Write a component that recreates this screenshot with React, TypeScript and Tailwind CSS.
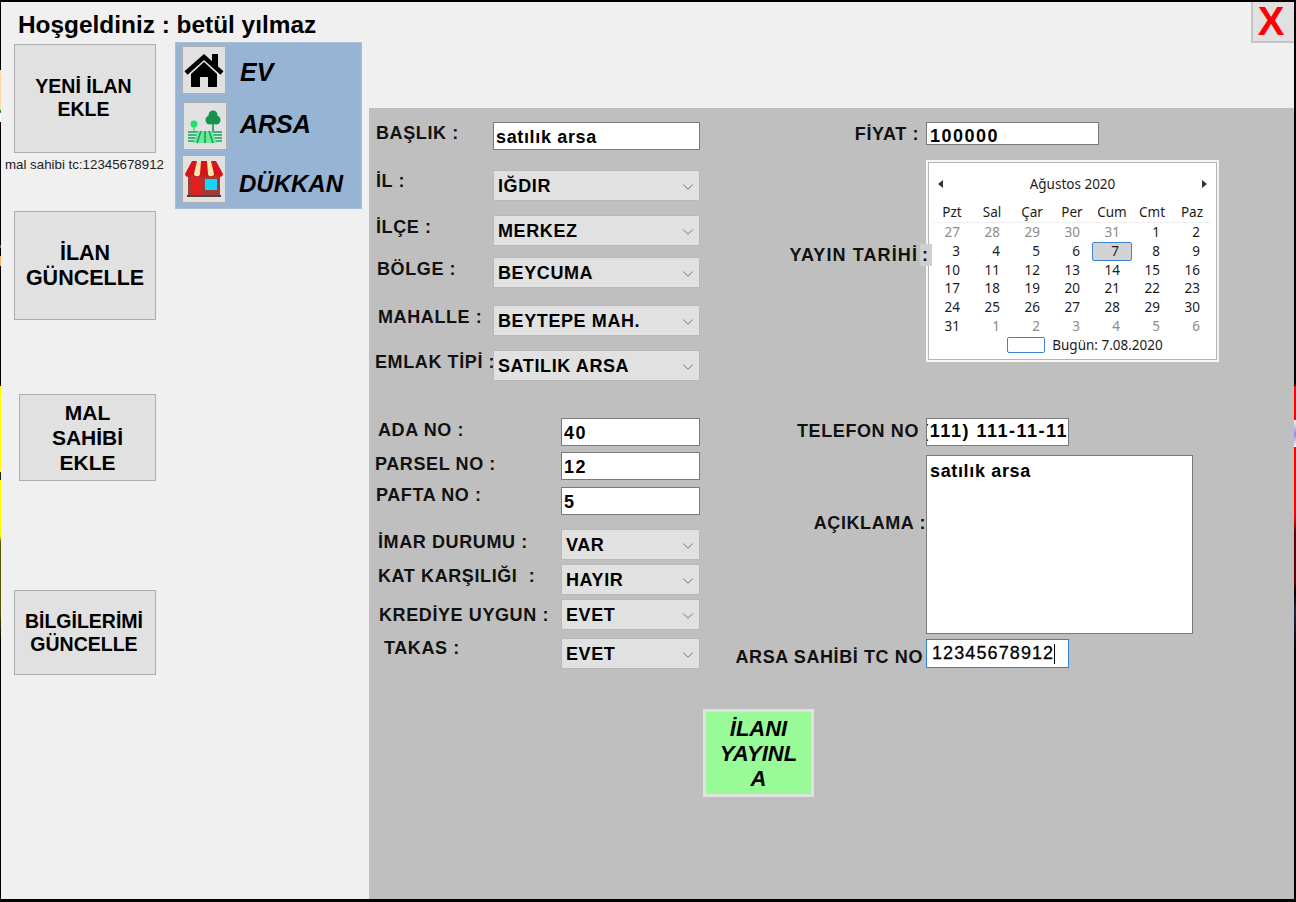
import type { ReactNode } from 'react';
import { ChevronDown } from 'lucide-react';

const SANS = 'font-["Liberation_Sans",Arial,sans-serif]';

const leftRows = [
  { label: 'BAŞLIK :', value: 'satılık arsa', kind: 'input', gap: 'mt-[14px]', labelBox: 'w-[124px] pl-[7px] -mt-[1px]', control: 'w-[207px] h-[28px]' },
  { label: 'İL :', value: 'IĞDIR', kind: 'select', gap: 'mt-[20px]', labelBox: 'w-[124px] pl-[7px] -mt-[1px]', control: 'w-[207px] h-[31px]' },
  { label: 'İLÇE :', value: 'MERKEZ', kind: 'select', gap: 'mt-[14px]', labelBox: 'w-[124px] pl-[7px]', control: 'w-[207px] h-[31px]' },
  { label: 'BÖLGE :', value: 'BEYCUMA', kind: 'select', gap: 'mt-[11px]', labelBox: 'w-[124px] pl-[8px]', control: 'w-[207px] h-[31px]' },
  { label: 'MAHALLE :', value: 'BEYTEPE MAH.', kind: 'select', gap: 'mt-[17px]', labelBox: 'w-[124px] pl-[9px]', control: 'w-[207px] h-[31px]' },
  { label: 'EMLAK TİPİ :', value: 'SATILIK ARSA', kind: 'select', gap: 'mt-[14px]', labelBox: 'w-[124px] pl-[6px]', control: 'w-[207px] h-[31px]' },
  { label: 'ADA NO :', value: '40', kind: 'input', gap: 'mt-[37px]', labelBox: 'w-[192px] pl-[9px]', control: 'w-[139px] h-[28px]' },
  { label: 'PARSEL NO :', value: '12', kind: 'input', gap: 'mt-[6px]', labelBox: 'w-[192px] pl-[6px]', control: 'w-[139px] h-[28px]' },
  { label: 'PAFTA NO :', value: '5', kind: 'input', gap: 'mt-[7px]', labelBox: 'w-[192px] pl-[7px] -mt-[4px]', control: 'w-[139px] h-[28px]' },
  { label: 'İMAR DURUMU :', value: 'VAR', kind: 'select', gap: 'mt-[14px]', labelBox: 'w-[192px] pl-[9px] mt-[1px]', control: 'w-[139px] h-[31px]' },
  { label: 'KAT KARŞILIĞI  :', value: 'HAYIR', kind: 'select', gap: 'mt-[4px]', labelBox: 'w-[192px] pl-[9px]', control: 'w-[139px] h-[31px]' },
  { label: 'KREDİYE UYGUN :', value: 'EVET', kind: 'select', gap: 'mt-[4px]', labelBox: 'w-[192px] pl-[10px] mt-[4px]', control: 'w-[139px] h-[31px]' },
  { label: 'TAKAS :', value: 'EVET', kind: 'select', gap: 'mt-[8px]', labelBox: 'w-[192px] pl-[15px] -mt-[2px]', control: 'w-[139px] h-[31px]' },
];

const weeks = [
  [27, 28, 29, 30, 31, 1, 2],
  [3, 4, 5, 6, 7, 8, 9],
  [10, 11, 12, 13, 14, 15, 16],
  [17, 18, 19, 20, 21, 22, 23],
  [24, 25, 26, 27, 28, 29, 30],
  [31, 1, 2, 3, 4, 5, 6],
];

function HouseIcon() {
  return (
    <svg viewBox="0 0 40 40" className="w-[40px] h-[40px]">
      <path d="M2 23 20 7l18 16" fill="none" stroke="#000" strokeWidth="4.500" />
      <path d="M28 4h6v15l-6-5z" fill="#000" />
      <path d="M7 24 20 12l13 12v13H24V27h-8v10H7z" fill="#000" />
    </svg>
  );
}

function LandIcon() {
  return (
    <svg viewBox="0 0 40 40" className="w-[40px] h-[40px]">
      <circle cx="9" cy="18" r="3.500" fill="#1fe36b" />
      <path d="M8.300 19h1.400v6H8.300z" fill="#1fe36b" />
      <circle cx="28" cy="9" r="4.500" fill="#15924f" />
      <circle cx="25" cy="14" r="4.500" fill="#15924f" />
      <circle cx="31" cy="14" r="4.500" fill="#15924f" />
      <path d="M27.200 14h1.600v11h-1.600z" fill="#15924f" />
      <path d="M3 26h34M3 29h34M3 32h34M3 35h34" stroke="#12a355" strokeWidth="1.600" />
      <path d="M13 25h14l5 12H8z" fill="#72e59d" />
      <path d="M16 25l-4 12M20 25v12M24 25l4 12" stroke="#12a355" strokeWidth="1.600" />
    </svg>
  );
}

function ShopIcon() {
  return (
    <svg viewBox="0 0 40 40" className="w-[40px] h-[40px]">
      <path d="M4 15h32v22H4z" fill="#a33a36" />
      <path d="M8 19h10v17H8z" fill="#e0201f" />
      <path d="M21 20h12v11H21z" fill="#15d4f7" />
      <path d="M3 36h34v2H3z" fill="#54423f" />
      <path d="M8 2h24l7 13c0 4-7 4-7 0 0 4-6 4-6 0 0 4-6 4-6 0 0 4-6 4-6 0 0 4-6 4-6 0 0 4-7 4-7 0z" fill="#d6121a" />
      <path d="M13 2h4l-1 13c0 3-6 3-6 0zM23 2h4l3 13c0 3-6 3-6 0z" fill="#f7e7a8" />
    </svg>
  );
}

function Tile({ children, className }: { children: ReactNode; className: string }) {
  return (
    <div className={`flex items-center justify-center bg-[#e1e1e1] border border-[#adadad] w-[44px] h-[48px] shrink-0 ${className}`}>
      {children}
    </div>
  );
}

function SideButton({ children, className }: { children: ReactNode; className: string }) {
  return (
    <button className={`flex items-center justify-center text-center bg-[#e1e1e1] border border-[#adadad] text-black font-bold ${className}`}>
      {children}
    </button>
  );
}

function TextBox({ value, className }: { value: string; className: string }) {
  const numeric = /^[\d() -]+$/.test(value);
  return (
    <div className={`flex items-center bg-white border border-[#7a7a7a] pl-[2px] pt-[2px] font-bold text-[18px] text-black ${numeric ? 'tracking-[1.500px]' : 'tracking-[0.650px]'} ${className}`}>
      {value}
    </div>
  );
}

function Combo({ value, className }: { value: string; className: string }) {
  return (
    <div className={`flex items-center justify-between bg-[#e1e1e1] border border-[#b8b8b8] pl-[4px] pr-[2px] pt-[2px] font-bold text-[18px] tracking-[0.600px] text-black ${className}`}>
      <span>{value}</span>
      <ChevronDown className="w-[18px] h-[18px] text-[#666666]" strokeWidth={1.200} />
    </div>
  );
}

function Calendar() {
  return (
    <div className={`w-[293px] h-[202px] shrink-0 bg-white border-2 border-[#f6f6f6] shadow-[inset_0_0_0_1px_#b5b5b5] font-["Noto_Sans",sans-serif] text-[13.500px] text-[#1c1c1c] px-[8px] pt-[12px] leading-[19px]`}>
      <div className="flex items-center justify-between h-[20px] px-[2px]">
        <span className="w-0 h-0 border-y-[4px] border-y-transparent border-r-[5px] border-r-[#333333]" />
        <span>Ağustos 2020</span>
        <span className="w-0 h-0 border-y-[4px] border-y-transparent border-l-[5px] border-l-[#333333]" />
      </div>
      <div className="grid grid-cols-7 mt-[9px] w-[280px] h-[20px] border-b border-[#f0f0f0] text-center -ml-[4px]">
        {['Pzt', 'Sal', 'Çar', 'Per', 'Cum', 'Cmt', 'Paz'].map((d) => (
          <span key={d}>{d}</span>
        ))}
      </div>
      <div className="grid grid-cols-7 w-[280px] -ml-[4px]">
        {weeks.map((week, w) =>
          week.map((day, i) => {
            const muted = (w === 0 && i < 5) || (w === 5 && i > 0);
            const today = w === 1 && i === 4;
            return (
              <span
                key={`${w}-${i}`}
                className={`h-[18.800px] text-right pr-[12px] ${muted ? 'text-[#8c8c8c]' : ''} ${today ? 'bg-[#d3d3d3] border border-[#3a84d6] rounded-[2px] leading-[17px]' : ''}`}
              >
                {day}
              </span>
            );
          })
        )}
      </div>
      <div className="flex items-center justify-center gap-[7px] pl-[25px]">
        <span className="w-[38px] h-[16px] border border-[#3a84d6] rounded-[2px]" />
        <span>Bugün: 7.08.2020</span>
      </div>
    </div>
  );
}

function FormLabel({ children, className }: { children: ReactNode; className: string }) {
  return <div className={`font-bold text-[18px] leading-[24px] tracking-[0.600px] text-[#111111] whitespace-pre ${className}`}>{children}</div>;
}

export default function App() {
  return (
    <div className={`${SANS} w-[1296px] h-[902px] overflow-hidden flex bg-[#f0f0f0] border-t-2 border-b-[3px] border-black`}>
      {/* ekran kenarindan gorunen arka plan seritleri */}
      <div className="w-px shrink-0 bg-[linear-gradient(to_bottom,#000_68px,#ffd9a0_68px,#ffd9a0_108px,#2a8a3a_108px,#2a8a3a_111px,#ffffff_111px,#ffffff_120px,#000_120px,#000_243px,#2a8a3a_243px,#2a8a3a_246px,#000_246px,#000_254px,#ffb060_254px,#ffb060_264px,#000_264px,#000_384px,#ffff00_384px,#ffff00_470px,#222_470px,#222_478px,#ffff00_478px,#ffff00_534px,#555500_540px,#555500_610px,#000_640px)]" />

      {/* Sol menu */}
      <aside className="w-[368px] shrink-0 flex flex-col">
        <h1 className="text-[24.400px] font-bold text-black leading-[28px] pl-[17px] pt-[9px] h-[40px] whitespace-nowrap">Hoşgeldiniz : betül yılmaz</h1>
        <div className="flex pl-[13px]">
          <div className="w-[161px] shrink-0 flex flex-col">
            <SideButton className="w-[142px] h-[109px] mt-[2px] text-[19.500px] leading-[23px] pr-[3px] pb-[2px]">YENİ İLAN<br />EKLE</SideButton>
            <div className="text-[13.300px] text-[#222222] -ml-[9px] mt-[4px] leading-[16px] whitespace-nowrap">mal sahibi tc:12345678912</div>
            <SideButton className="w-[142px] h-[109px] mt-[38px] text-[21.500px] leading-[25px]">İLAN<br />GÜNCELLE</SideButton>
            <SideButton className="w-[137px] h-[87px] mt-[74px] ml-[5px] text-[21px] leading-[25px]">MAL<br />SAHİBİ<br />EKLE</SideButton>
            <SideButton className="w-[142px] h-[85px] mt-[109px] text-[19.500px] leading-[23px] pr-[2px]">BİLGİLERİMİ<br />GÜNCELLE</SideButton>
          </div>
          <div className="w-[187px] h-[167px] bg-[#98b4d4] border border-[#a9c0da] pl-[6px] pt-[3px] flex flex-col">
            <div className="flex items-center">
              <Tile className="">
                <HouseIcon />
              </Tile>
              <span className="ml-[14px] mt-[4px] font-bold italic text-[25px] leading-[30px] text-black">EV</span>
            </div>
            <div className="flex items-center mt-[8px]">
              <Tile className="ml-[1px]">
                <LandIcon />
              </Tile>
              <span className="ml-[13px] -mt-[4px] font-bold italic text-[25px] leading-[30px] text-black">ARSA</span>
            </div>
            <div className="flex items-center mt-[5px]">
              <Tile className="">
                <ShopIcon />
              </Tile>
              <span className="ml-[13px] mt-[10px] font-bold italic text-[24px] leading-[30px] text-black whitespace-nowrap">DÜKKAN</span>
            </div>
          </div>
        </div>
      </aside>

      {/* Sag taraf */}
      <main className="flex-1 min-w-0 flex flex-col">
        <div className="h-[106px] shrink-0 flex justify-end items-start">
          <button className="flex items-center justify-center w-[43px] h-[41px] pr-[5px] pb-[1px] bg-[#e1e1e1] border-l-2 border-b-2 border-[#c4c4c4] text-[#ff0000] font-bold text-[40px] leading-[36px]">X</button>
        </div>

        <div className="flex-1 min-h-0 bg-[#bfbfbf] flex">
          {/* Form sol kolon */}
          <div className="w-[331px] shrink-0">
            {leftRows.map((r) => (
              <div key={r.label} className={`flex items-start ${r.gap}`}>
                <FormLabel className={`shrink-0 ${r.labelBox}`}>{r.label}</FormLabel>
                {r.kind === 'input' ? (
                  <TextBox value={r.value} className={r.control} />
                ) : (
                  <Combo value={r.value} className={r.control} />
                )}
              </div>
            ))}
          </div>

          {/* Form sag kolon */}
          <div className="flex-1 min-w-0">
            <div className="flex mt-[14px]">
              <FormLabel className="w-[226px] text-right pr-[7px]">FİYAT :</FormLabel>
              <TextBox value="100000" className="w-[173px] h-[23px] pt-[6px] pl-[3px]" />
            </div>
            <div className="flex items-center mt-[14px]">
              <FormLabel className="w-[226px] shrink-0 flex justify-end items-center mt-[-12px]">
                <span className="tracking-[1.100px]">YAYIN TARİHİ</span>
                <span className="relative z-10 -mr-[6px] ml-[2px] w-[12px] h-[22px] bg-[#cfcfcf] leading-[22px] pl-[2px]">:</span>
              </FormLabel>
              <Calendar />
            </div>
            <div className="flex mt-[56px]">
              <FormLabel className="w-[226px] text-right pr-[7px] pt-[1px]">TELEFON NO</FormLabel>
              <TextBox value="(111) 111-11-11" className="w-[143px] h-[28px] overflow-hidden justify-end whitespace-nowrap pb-[4px]" />
            </div>
            <div className="flex mt-[9px]">
              <FormLabel className="w-[226px] text-right pt-[56px]">AÇIKLAMA :</FormLabel>
              <div className="w-[267px] h-[179px] bg-white border border-[#7a7a7a] pl-[3px] pt-[5px] font-bold text-[18px] tracking-[0.650px] leading-[20px] text-black">satılık arsa</div>
            </div>
            <div className="flex mt-[5px]">
              <FormLabel className="w-[226px] text-right pr-[3px] pt-[6px]">ARSA SAHİBİ TC NO</FormLabel>
              <div className="w-[143px] h-[29px] flex items-center bg-white border border-[#2f83d6] pl-[5px] text-[18px] tracking-[1.100px] text-black [-webkit-text-stroke:0.300px_black]">
                12345678912<span className="w-px h-[20px] bg-black" />
              </div>
            </div>
            <button className="block mt-[40px] ml-[3px] w-[111px] h-[88px] bg-[#98fb98] border-[3px] border-[#e1e1e1] font-bold italic text-[22px] leading-[25px] text-black">
              İLANI<br />YAYINL<br />A
            </button>
          </div>
        </div>
      </main>

      <div className="w-[2px] shrink-0 bg-[linear-gradient(to_bottom,#000_384px,#ff0000_384px,#ff0000_418px,#ffffff_418px,#8a8ae0_432px,#ffffff_445px,#ff0000_445px,#ff0000_515px,#600000_530px,#600000_580px,#000_590px,#1a2440_610px,#000_650px)]" />
    </div>
  );
}
